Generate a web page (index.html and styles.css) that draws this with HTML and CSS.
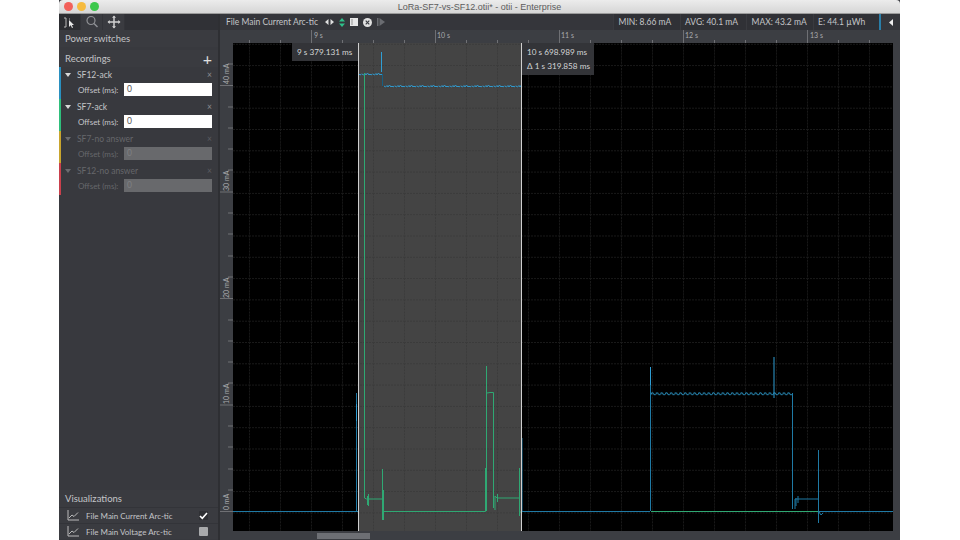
FILE: index.html
```html
<!DOCTYPE html>
<html lang="en">
<head>
  <meta charset="UTF-8" />
  <title>LoRa-SF7-vs-SF12.otii* - otii - Enterprise</title>
  <link rel="stylesheet" href="styles.css">
</head>
<body>
  <div class="window">
    <div class="titlebar">
      <div class="lights">
        <span class="light red"></span>
        <span class="light yellow"></span>
        <span class="light green"></span>
      </div>
      <div class="title">LoRa-SF7-vs-SF12.otii* - otii - Enterprise</div>
    </div>

    <div class="main">
      <div class="sidebar">
        <div class="tools">
          <div class="tool active">
            <svg width="16" height="14" viewBox="0 0 16 14"><path d="M2 3h2v9H2" fill="none" stroke="#b8b8b8"/><path d="M7 4l1 0" stroke="#b8b8b8"/><path d="M7 5v7l1.700-1.700L10 13l1-.5-1.200-2.500H12z" fill="#e8e8e8"/></svg>
          </div>
          <div class="tool">
            <svg width="14" height="14" viewBox="0 0 14 14"><circle cx="6" cy="5.500" r="4" fill="none" stroke="#8f9094" stroke-width="1.200"/><path d="M9 8.500l3.500 3.500" stroke="#8f9094" stroke-width="1.400"/></svg>
          </div>
          <div class="tool">
            <svg width="14" height="14" viewBox="0 0 14 14"><path d="M7 1.500v11M1.500 7h11" stroke="#d0d0d0" stroke-width="1.500"/><path d="M7 .5l2 2.200H5zM7 13.500l2-2.200H5zM.5 7l2.200-2v4zM13.500 7l-2.200-2v4z" fill="#d0d0d0"/></svg>
          </div>
        </div>

        <div class="section-head power">Power switches</div>

        <div class="section-head recordings">
          <span>Recordings</span>
          <span class="add">+</span>
        </div>

        <div class="recording blue">
          <div class="rec-name"><span class="caret"></span><span>SF12-ack</span><span class="close">×</span></div>
          <div class="rec-offset"><label>Offset (ms):</label><span class="offset-input">0</span></div>
        </div>
        <div class="recording green">
          <div class="rec-name"><span class="caret"></span><span>SF7-ack</span><span class="close">×</span></div>
          <div class="rec-offset"><label>Offset (ms):</label><span class="offset-input">0</span></div>
        </div>
        <div class="recording yellow off">
          <div class="rec-name"><span class="caret"></span><span>SF7-no answer</span><span class="close">×</span></div>
          <div class="rec-offset"><label>Offset (ms):</label><span class="offset-input">0</span></div>
        </div>
        <div class="recording red off">
          <div class="rec-name"><span class="caret"></span><span>SF12-no answer</span><span class="close">×</span></div>
          <div class="rec-offset"><label>Offset (ms):</label><span class="offset-input">0</span></div>
        </div>

        <div class="visualizations">
          <div class="section-head">Visualizations</div>
          <div class="viz-row">
            <svg class="viz-icon" width="12" height="11" viewBox="0 0 12 11"><path d="M1 0v10h11" fill="none" stroke="#bbb"/><path d="M2 8l3-3 2 1.500 4-4" fill="none" stroke="#bbb"/></svg>
            <span class="viz-name">File Main Current Arc-tic</span>
            <span class="check on">
              <svg width="9" height="9" viewBox="0 0 9 9"><path d="M1 5l2.300 2.300L8 2" fill="none" stroke="#fff" stroke-width="1.600"/></svg>
            </span>
          </div>
          <div class="viz-row">
            <svg class="viz-icon" width="12" height="11" viewBox="0 0 12 11"><path d="M1 0v10h11" fill="none" stroke="#bbb"/><path d="M2 8l3-3 2 1.500 4-4" fill="none" stroke="#bbb"/></svg>
            <span class="viz-name">File Main Voltage Arc-tic</span>
            <span class="check"></span>
          </div>
        </div>
      </div>

      <div class="content">
        <div class="chart-bar">
          <span class="chart-name">File Main Current Arc-tic</span>
          <div class="chart-controls">
            <svg width="9" height="8" viewBox="0 0 9 8"><path d="M3.500 1v6L0 4zM5.500 1v6L9 4z" fill="#ddd"/></svg>
            <svg width="6" height="9" viewBox="0 0 6 9"><path d="M0 3.500h6L3 0zM0 5.500h6L3 9z" fill="#2fc08a"/></svg>
            <svg width="8" height="8" viewBox="0 0 8 8"><rect width="8" height="8" fill="#e6e6e6"/><rect y="1" x="1" width="2" height="6" fill="#bbb"/></svg>
            <svg width="9" height="9" viewBox="0 0 9 9"><circle cx="4.500" cy="4.500" r="4.500" fill="#e0e0e0"/><path d="M2.700 2.700l3.600 3.600M6.300 2.700L2.700 6.300" stroke="#3a3c42" stroke-width="1.200"/></svg>
            <svg width="8" height="8" viewBox="0 0 8 8"><rect width="1.500" height="8" fill="#6a6c71"/><path d="M2.500 0L8 4 2.500 8z" fill="#6a6c71"/></svg>
          </div>
          <div class="stats">
            <span class="stat">MIN: 8.66 mA</span>
            <span class="stat">AVG: 40.1 mA</span>
            <span class="stat">MAX: 43.2 mA</span>
            <span class="stat">E: 44.1 µWh</span>
          </div>
          <div class="panel-toggle"><svg width="4" height="7" viewBox="0 0 4 7"><path d="M4 0v7L0 3.500z" fill="#eee"/></svg></div>
        </div>

        <div class="plot">
          <svg class="plot-svg" width="680" height="501" viewBox="220 30 680 501">
            <defs>
              <pattern id="grid" x="249" y="1.200" width="31" height="21.300" patternUnits="userSpaceOnUse">
                <path d="M.5 0v21.300M0 .5h31" stroke="#191919" stroke-dasharray="2 1" fill="none"/>
              </pattern>
              <pattern id="gridSel" x="249" y="1.200" width="31" height="21.300" patternUnits="userSpaceOnUse">
                <path d="M.5 0v21.300M0 .5h31" stroke="#3b3b3b" stroke-dasharray="2 1" fill="none"/>
              </pattern>
              <pattern id="wave" x="651" y="391" width="4.700" height="5" patternUnits="userSpaceOnUse">
                <path d="M0 3.500Q1.200 .5 2.350 2.500T4.700 3.500" stroke="#2685b0" fill="none"/>
              </pattern>
              <pattern id="noise" x="384" y="84" width="11" height="4" patternUnits="userSpaceOnUse">
                <path d="M0 2l1.500 1 1.500-1.500 1 1.500 1.500-2 1.500 2 1-1 1 1 1.500-1" stroke="#2f9bd0" fill="none"/>
              </pattern>
            </defs>

            <rect class="plot-bg" x="233" y="43" width="660" height="488"/>
            <rect x="233" y="43" width="660" height="488" fill="url(#grid)"/>
            <rect class="selection" x="358" y="43" width="163" height="488"/>
            <rect x="358" y="43" width="163" height="488" fill="url(#gridSel)"/>

            <!-- axes -->
            <g class="ticks">
              <path d="M228 64h5M220 85.500h13M228 107h5M228 128h5M228 149h5M228 170h5M220 192h13M228 213h5M228 234h5M228 256h5M228 277h5M220 298.500h13M228 320h5M228 341h5M228 362h5M228 383h5M220 405h13M228 426h5M228 447h5M228 469h5M228 490h5M220 511.500h13"/>
              <path d="M249.500 40v3M280.500 40v3M311.500 30v13M342.500 40v3M373.500 40v3M404.500 40v3M435.500 30v13M466.500 40v3M497.500 40v3M528.500 40v3M559.500 30v13M590.500 40v3M621.500 40v3M652.500 40v3M683.500 30v13M714.500 40v3M745.500 40v3M776.500 40v3M807.500 30v13M838.500 40v3M869.500 40v3"/>
            </g>
            <g class="axis-text">
              <text x="314" y="38">9 s</text>
              <text x="437" y="38">10 s</text>
              <text x="561" y="38">11 s</text>
              <text x="685" y="38">12 s</text>
              <text x="810" y="38">13 s</text>
              <text transform="translate(229 84) rotate(-90)">40 mA</text>
              <text transform="translate(229 191) rotate(-90)">30 mA</text>
              <text transform="translate(229 298) rotate(-90)">20 mA</text>
              <text transform="translate(229 404) rotate(-90)">10 mA</text>
              <text transform="translate(229 510) rotate(-90)">0 mA</text>
            </g>

            <!-- SF12-ack -->
            <g class="trace-blue">
              <path d="M233 511.500H358"/>
              <path d="M356.500 511V393"/>
              <path class="bright" d="M356.500 421V404"/>
              <path class="bright" d="M381.500 72V52"/>
              <path class="dim" d="M382.500 74V86"/>
              <path d="M522 511V438"/>
              <path d="M522 511.500H650"/>
              <path d="M650.500 511V367V400"/>
              <path class="bright" d="M650.500 385V367"/>
              <rect x="651" y="391" width="141" height="5" fill="url(#wave)" stroke="none"/>
              <path d="M774 357V398" class="bright"/>
              <path d="M792.500 393V509"/>
              <path d="M795 509V499H818"/>
              <path d="M796 498V506M798 496V503"/>
              <path d="M818.500 450V523"/>
              <path d="M819 512l2 3 2-2"/>
              <path d="M818 511.500H893"/>
            </g>
            <rect x="359" y="72" width="23" height="4" fill="url(#noise)"/>
            <rect x="384" y="84" width="137" height="4" fill="url(#noise)"/>

            <!-- SF7-ack -->
            <g class="trace-green">
              <path d="M364.500 73V498l2 1H382"/>
              <path d="M367.500 496V505M368.500 494V506"/>
              <path d="M382.500 469V520M383.500 490V520"/>
              <path d="M383 511.500H485.500V468"/>
              <path d="M486.500 511V366"/>
              <path d="M487 393l3-.5h3.500V508"/>
              <path d="M495 510V496l2 2H519"/>
              <path d="M497.500 494V502"/>
              <path d="M519.500 468V516"/>
              <path d="M520 512h2"/>
              <path d="M651 511.500H818"/>
            </g>
            <path class="cursor" d="M358.500 43V531M521.500 43V531"/>
          </svg>

          <div class="cursor-tip tip-start">9 s 379.131 ms</div>
          <div class="cursor-tip tip-end">10 s 698.989 ms<br>Δ 1 s 319.858 ms</div>
        </div>

        <div class="scrollbar"><div class="thumb"></div></div>
      </div>
    </div>
  </div>
</body>
</html>
```

FILE: styles.css
```css
html, body {
  margin: 0;
  height: 100%;
  background: white;
  overflow: hidden;
}
body {
  font-family: Lato, "Noto Sans", sans-serif;
  font-size: 8.500px;
  color: #c4c5c8;
}
.window {
  width: 841px;
  height: 540px;
  margin-left: 59px;
  display: flex;
  flex-direction: column;
  background: #3a3c41;
}
.titlebar {
  height: 13px;
  flex: none;
  display: flex;
  align-items: center;
  position: relative;
  justify-content: center;
  background: linear-gradient(#ececec, #d6d6d6);
  border-bottom: 1px solid #9b9b9b;
  border-radius: 4px 4px 0 0;
}
.lights {
  position: absolute;
  left: 5px;
  top: 2px;
  display: flex;
  gap: 4px;
}
.light {
  width: 9px;
  height: 9px;
  border-radius: 50%;
}
.light.red { background: #f2605a; }
.light.yellow { background: #f6bb3f; }
.light.green { background: #3cc84c; }
.title {
  font-family: "Liberation Sans", sans-serif;
  font-size: 9px;
  color: #5c5c5c;
}

.main {
  flex: 1;
  display: flex;
  min-height: 0;
}
.sidebar {
  width: 159px;
  flex: none;
  display: flex;
  flex-direction: column;
  background: #38393e;
  border-right: 2px solid #2e2f33;
}
.tools {
  height: 16px;
  display: flex;
  background: #303136;
}
.tool {
  width: 22px;
  display: flex;
  align-items: center;
  justify-content: center;
  background: #3a3b40;
  border-right: 1px solid #333439;
  box-sizing: border-box;
}
.tool.active { background: #2c2d31; }

.section-head {
  height: 17px;
  display: flex;
  align-items: center;
  justify-content: space-between;
  padding: 0 6px;
  font-size: 9.500px;
  background: #3a3b40;
}
.section-head.power { margin-bottom: 3px; }
.add {
  font-size: 16px;
  line-height: 16px;
  color: #e0e0e0;
}

.recording {
  height: 32px;
  border-left: 2px solid;
  box-sizing: border-box;
  padding-left: 4px;
}
.recording.blue { border-color: #2a90c0; }
.recording.green { border-color: #2fbf7c; }
.recording.yellow { border-color: #c9a52e; }
.recording.red { border-color: #c9404c; }
.recording.off { color: #66676b; }
.rec-name {
  height: 16px;
  display: flex;
  align-items: center;
}
.caret {
  width: 0;
  height: 0;
  margin: 0 6px 0 0;
  border-left: 3.500px solid transparent;
  border-right: 3.500px solid transparent;
  border-top: 4px solid #d8d8d8;
}
.off .caret { border-top-color: #6a6b6f; }
.close {
  margin-left: auto;
  margin-right: 6px;
  color: #8c8d90;
}
.off .close { color: #5b5c60; }
.rec-offset {
  display: flex;
  align-items: center;
  height: 13px;
  padding-left: 13px;
}
.rec-offset label {
  width: 46px;
  font-size: 8px;
}
.offset-input {
  width: 85px;
  height: 13px;
  line-height: 13px;
  padding-left: 3px;
  background: white;
  color: #555;
}
.off .offset-input {
  background: #68696c;
  color: #7f8083;
}

.visualizations {
  margin-top: auto;
  padding-bottom: 1px;
}
.viz-row {
  height: 16px;
  display: flex;
  align-items: center;
  padding: 0 10px 0 8px;
  border-top: 1px solid #333439;
  box-sizing: border-box;
  background: #3a3b40;
  font-size: 8px;
}
.viz-icon { margin-right: 7px; }
.check {
  margin-left: auto;
  width: 9px;
  height: 9px;
  background: #a9aaac;
  border-radius: 1px;
}
.check.on {
  background: #2f3034;
  display: flex;
}

.content {
  flex: 1;
  min-width: 0;
  display: flex;
  flex-direction: column;
}
.chart-bar {
  height: 16px;
  flex: none;
  display: flex;
  align-items: center;
  background: #35363b;
  padding-left: 6px;
}
.chart-name { width: 99px; }
.chart-controls {
  display: flex;
  align-items: center;
  gap: 5px;
}
.stats {
  margin-left: auto;
  display: flex;
  height: 100%;
}
.stat {
  width: 66.500px;
  box-sizing: border-box;
  padding-left: 4.500px;
  line-height: 16px;
  background: #303136;
  border-left: 1px solid #393a3f;
}
.panel-toggle {
  width: 21px;
  box-sizing: border-box;
  height: 100%;
  display: flex;
  align-items: center;
  justify-content: center;
  border-left: 2px solid #2a7ea8;
  background: #35363b;
}

.plot {
  position: relative;
  height: 501px;
  flex: none;
}
.plot-svg {
  display: block;
  background: #3c3e43;
}
.plot-bg { fill: black; }
.selection { fill: #444; }
.ticks path {
  stroke: #6f7074;
  fill: none;
}
.axis-text text {
  font-size: 7px;
  fill: #a9aaad;
}
.trace-blue path {
  stroke: #1f7aa5;
  fill: none;
}
.trace-blue .bright { stroke: #2f9ed4; }
.trace-blue .dim { stroke: #185f80; }
.trace-green path {
  stroke: #2fa873;
  fill: none;
}
.cursor {
  stroke: #cfcfcf;
  fill: none;
}
.cursor-tip {
  position: absolute;
  top: 13px;
  background: #333438;
  color: #d4d4d6;
  padding: 2px 5px;
  font-size: 8.200px;
  line-height: 14px;
  white-space: nowrap;
}
.tip-start {
  left: 72px;
  width: 56px;
}
.tip-end {
  left: 302px;
  width: 62px;
}

.scrollbar {
  flex: 1;
  background: #3c3e43;
  padding-left: 97px;
  padding-top: 2px;
}
.thumb {
  width: 53px;
  height: 6px;
  background: #6d6f74;
}
```
